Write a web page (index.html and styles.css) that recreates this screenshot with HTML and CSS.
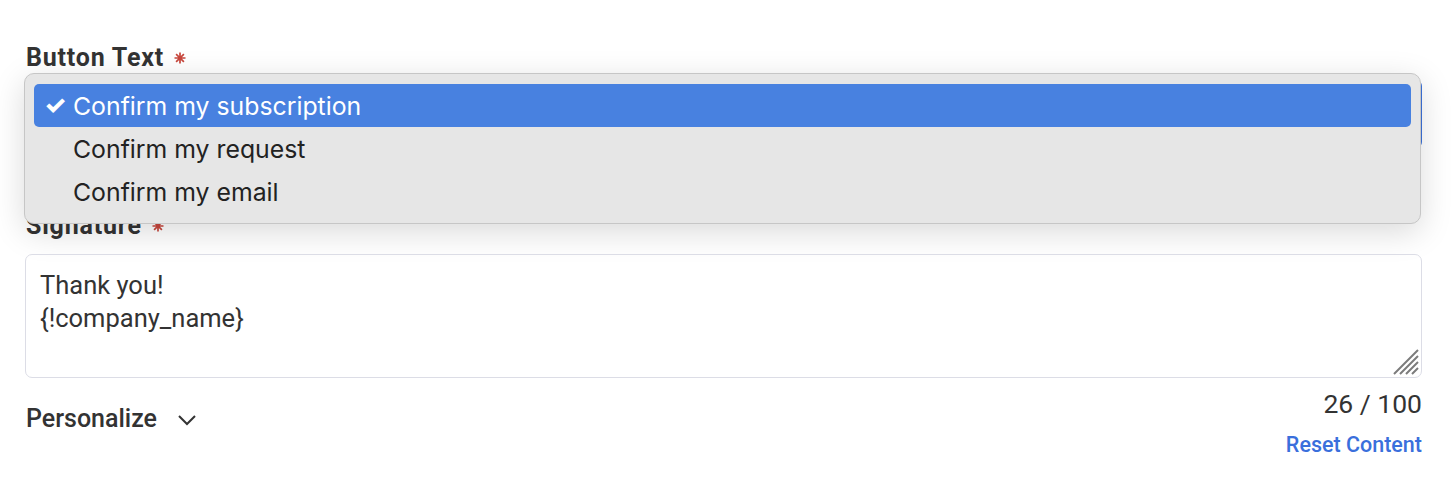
FILE: index.html
```html
<!DOCTYPE html>
<html lang="en">
<head>
<meta charset="utf-8">
<title>Form</title>
<link rel="stylesheet" href="styles.css">
</head>
<body>
<div class="form">
  <div class="field">
    <label class="label">Button Text <svg class="req" width="12" height="12" viewBox="0 0 12 12"><path d="M6 0.5 V11.5 M0.5 6 H11.5 M2.1 2.1 L9.9 9.9 M9.9 2.1 L2.1 9.9" stroke="#c8473d" stroke-width="1.7"/></svg></label>
    <div class="select-wrap">
      <div class="select"></div>
      <ul class="menu">
        <li class="opt selected"><span class="check">✓</span>Confirm my subscription</li>
        <li class="opt"><span class="check"></span>Confirm my request</li>
        <li class="opt"><span class="check"></span>Confirm my email</li>
      </ul>
    </div>
  </div>
  <div class="field sig">
    <label class="label">Signature <svg class="req" width="12" height="12" viewBox="0 0 12 12"><path d="M6 0.5 V11.5 M0.5 6 H11.5 M2.1 2.1 L9.9 9.9 M9.9 2.1 L2.1 9.9" stroke="#c8473d" stroke-width="1.7"/></svg></label>
    <div class="textarea">
      <div class="ta-text">Thank you!<br>{!company_name}</div>
      <svg class="grip" width="28" height="28" viewBox="0 0 28 28"><path d="M26 2 L2 26 M26 8 L8 26 M26 14 L14 26 M26 20 L20 26" stroke="#7c7c7c" stroke-width="2" fill="none"/></svg>
    </div>
  </div>
  <div class="bottom">
    <div class="personalize">Personalize
      <svg class="chev" width="20" height="12" viewBox="0 0 20 12"><path d="M2 2 L10 10 L18 2" stroke="#333" stroke-width="2" fill="none"/></svg>
    </div>
    <div class="right">
      <div class="count">26 / 100</div>
      <a class="reset">Reset Content</a>
    </div>
  </div>
</div>
</body>
</html>
```
FILE: styles.css
```css
* { box-sizing: border-box; }
body { margin: 0; background: #fff; font-family: Roboto, "Liberation Sans", sans-serif; color: #333; }
.form { padding: 43px 34px 0 25px; }
.label { display: block; font-weight: 700; font-size: 25px; color: #333; letter-spacing: 0.8px; line-height: 30px; height: 30px; padding-left: 1px; }
.req { vertical-align: 2px; margin-left: 3px; }
.select-wrap { position: relative; margin-top: 7px; }
.select { height: 68px; border: 1px solid #3c72da; border-radius: 6px; }
.menu { position: absolute; left: -1px; right: 1px; top: -7px; margin: 0; padding: 10px 9px; list-style: none;
  background: #e6e6e6; border: 1px solid #c6c6c6; border-radius: 10px;
  box-shadow: 0 8px 32px rgba(0,0,0,0.15); font-family: Inter, "Noto Sans", sans-serif; font-size: 24.8px; color: #222; }
.opt { height: 43px; display: flex; align-items: center; padding-left: 10px; border-radius: 5px; }
.opt.selected { background: #4881e0; color: #fff; }
.check { width: 29px; font-weight: 800; font-size: 25px; line-height: 1; }
.sig { margin-top: 63px; }
.textarea { position: relative; margin-top: 13px; height: 124px; border: 1px solid #dcdde6; border-radius: 7px; padding: 14px 14px; }
.ta-text { font-size: 25.5px; line-height: 33px; color: #333; }
.grip { position: absolute; right: 1px; bottom: 1px; }
.bottom { display: flex; justify-content: space-between; align-items: flex-start; margin-top: 11px; }
.personalize { display: flex; align-items: center; gap: 20px; font-size: 25px; line-height: 30px; font-weight: 500; margin-top: 15px; padding-left: 1px; }
.chev { margin-top: 2px; }
.right { display: flex; flex-direction: column; align-items: flex-end; }
.count { font-size: 26.5px; line-height: 30px; color: #333; }
.reset { margin-top: 13px; font-size: 21.5px; line-height: 26px; font-weight: 500; color: #3a6fdc; }
```
